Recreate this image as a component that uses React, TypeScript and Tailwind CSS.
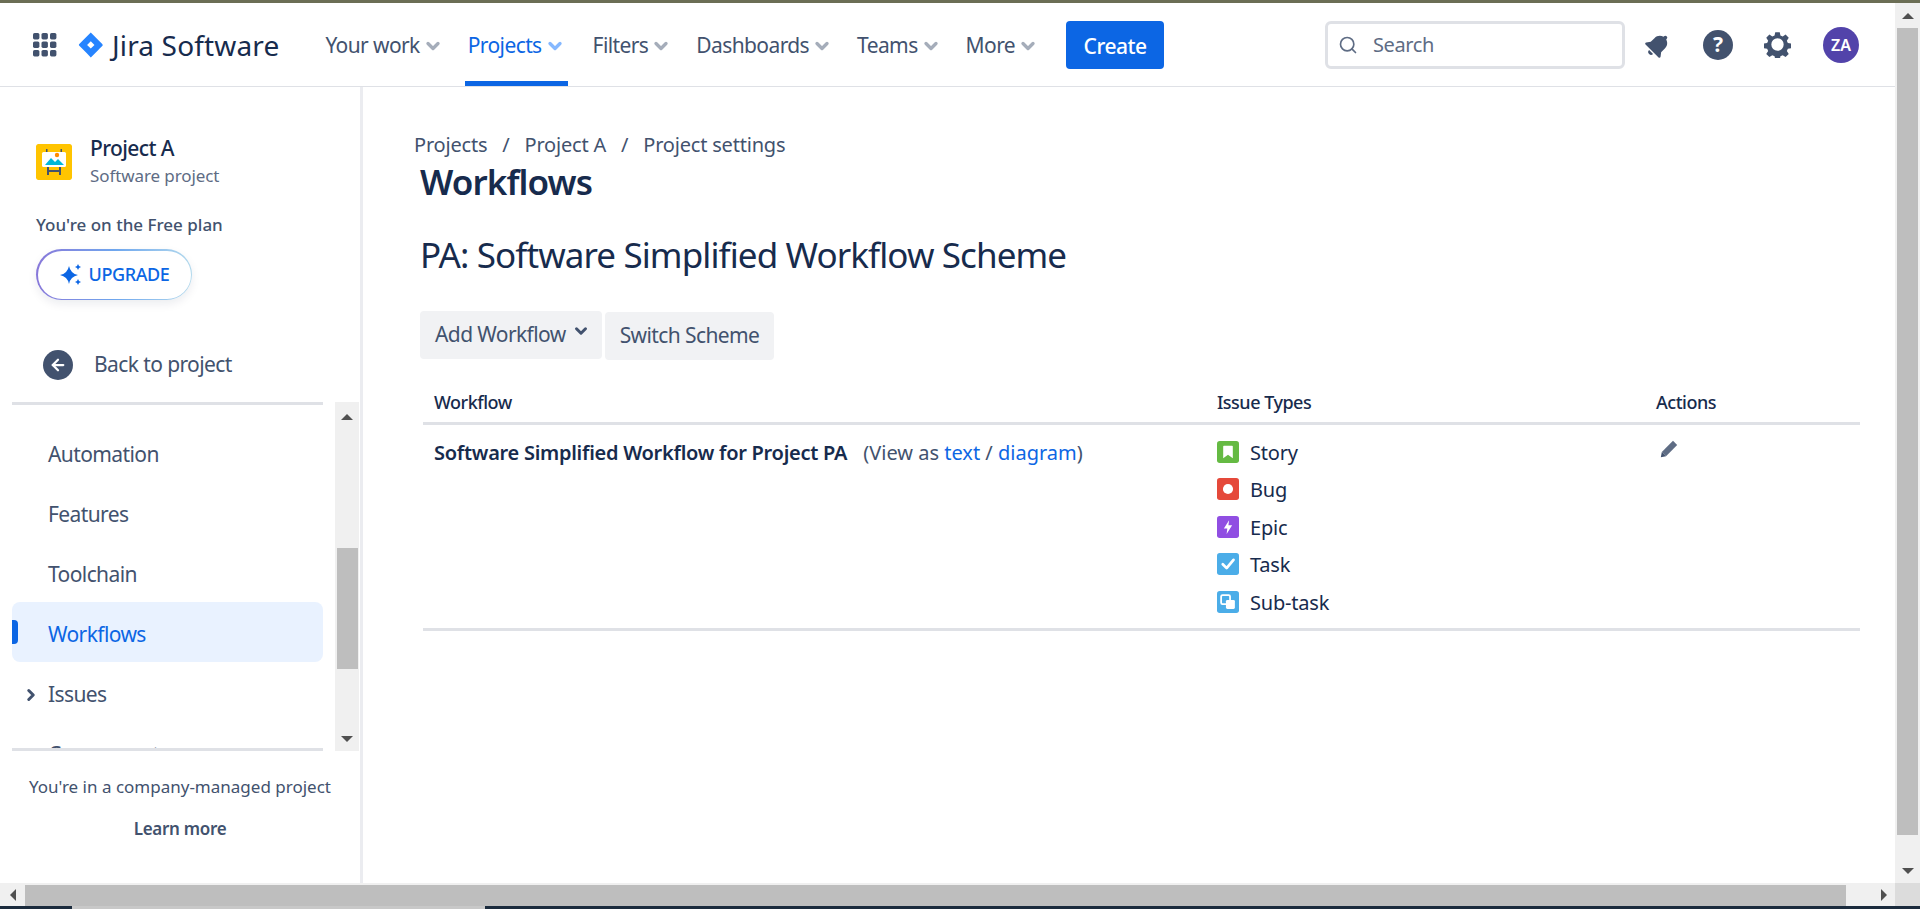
import { ChevronDown, ChevronRight, ArrowLeft, Search } from "lucide-react";

const font = "font-['Noto_Sans',sans-serif]";

function NavItem({ label, active }: { label: string; active?: boolean }) {
  return (
    <div
      className={`relative flex h-full items-center gap-[3px] px-[3px] pt-[3px] text-[21px] tracking-[-0.6px] ${
        active ? "mr-[3px] text-[#0c66e4]" : "text-[#42526e]"
      }`}
    >
      <span>{label}</span>
      <ChevronDown size={20} strokeWidth={4} className={active ? "text-[#85b8ff]" : "text-[#a5adba]"} />
      {active && <div className="absolute bottom-0 left-0 right-0 h-[5px] bg-[#0c66e4]" />}
    </div>
  );
}

function JiraMark() {
  return (
    <svg width="26" height="26" viewBox="0 0 24 24">
      <path
        fill="#2684ff"
        d="M22.6 11.3 12.7 1.4 11.8.5 4.4 7.9 1 11.3c-.3.3-.3.9 0 1.2l6.7 6.7 4.1 4.3 7.4-7.4.1-.1 3.3-3.3c.3-.3.3-.9 0-1.2zM11.8 15.3 8.4 11.9l3.4-3.4 3.4 3.4-3.4 3.4z"
      />
    </svg>
  );
}

function GridIcon() {
  const spots = [1, 9.5, 18];
  return (
    <svg width="24" height="24" viewBox="0 0 24 24" fill="#42526e">
      {spots.map((y) => spots.map((x) => <rect key={`${x}-${y}`} x={x - 1} y={y - 1} width="6.4" height="6.4" rx="1.6" />))}
    </svg>
  );
}

function TopBar() {
  return (
    <header className="flex h-[84px] shrink-0 items-center border-b border-[#dfe1e6] bg-white">
      <div className="ml-[33px]">
        <GridIcon />
      </div>
      <div className="ml-[21px]">
        <JiraMark />
      </div>
      <span className="ml-2 text-[28px] leading-none tracking-[0.15px] text-[#172b4d]">Jira Software</span>
      <nav className="ml-[43px] flex h-full items-center gap-[19px]">
        <NavItem label="Your work" />
        <NavItem label="Projects" active />
        <NavItem label="Filters" />
        <NavItem label="Dashboards" />
        <NavItem label="Teams" />
        <NavItem label="More" />
      </nav>
      <button className="ml-[25px] h-12 w-[98px] rounded-[4px] bg-[#0c66e4] pt-[4px] text-[21px] font-medium tracking-[-0.5px] text-white">
        Create
      </button>
      <div className="ml-auto flex h-12 w-[300px] items-center rounded-[6px] border-[3px] border-[#dfe1e6] pl-[10px]">
        <Search size={20} className="text-[#5e6c84]" />
        <span className="ml-[15px] text-[20px] tracking-[-0.4px] text-[#5e6c84]">Search</span>
      </div>
      <svg className="ml-[19px]" width="28" height="28" viewBox="0 0 24 24" fill="#42526e">
        <g transform="rotate(45 12 12)">
          <path d="M12 1.500a1.600 1.600 0 0 0-1.600 1.600v.6C7.400 4.500 5.700 7 5.700 10v4.500L3.300 17.600c-.5.7 0 1.600.8 1.600h15.800c.8 0 1.300-.9.800-1.600l-2.400-3.100V10c0-3-1.700-5.500-4.700-6.300v-.6A1.600 1.600 0 0 0 12 1.500z" />
          <path d="M9.600 20.400h4.800a2.400 2.400 0 0 1-4.800 0z" />
        </g>
      </svg>
      <div className="ml-[31px] flex h-[30px] w-[30px] items-center justify-center rounded-full bg-[#42526e] text-[21px] font-bold text-white">
        ?
      </div>
      <svg className="ml-[31px]" width="27" height="27" viewBox="0 0 24 24" fill="#42526e">
        <path
          fillRule="evenodd"
          d="M10 1h4l.6 3 2 .9 2.600-1.700 2.800 2.800-1.700 2.600.9 2 3 .6v4l-3 .6-.9 2 1.700 2.600-2.800 2.800-2.600-1.700-2 .9-.6 3h-4l-.6-3-2-.9-2.600 1.700-2.800-2.800 1.700-2.600-.9-2-3-.6v-4l3-.6.9-2L2 6l2.800-2.800 2.600 1.700 2-.9zM12 6.500a5.500 5.500 0 1 0 0 11 5.500 5.500 0 0 0 0-11z"
        />
      </svg>
      <div className="ml-[32px] mr-[36px] flex h-9 w-9 items-center justify-center rounded-full bg-[#5243aa] text-[16px] font-semibold text-white">
        ZA
      </div>
    </header>
  );
}

function ProjectIcon() {
  return (
    <svg width="36" height="36" viewBox="0 0 36 36" className="shrink-0 rounded-[2px]">
      <rect width="36" height="36" rx="2" fill="#ffc400" />
      <rect x="10" y="5" width="1.500" height="4" fill="#42526e" />
      <rect x="24.500" y="5" width="1.500" height="4" fill="#42526e" />
      <rect x="6" y="8" width="24" height="15" rx="1.500" fill="#ffffff" />
      <circle cx="21" cy="11" r="2.200" fill="#ff8b00" />
      <path d="M9 21 L15 14 L19 18 L22 15 L28 21 Z" fill="#00b8d9" />
      <rect x="11" y="23" width="2" height="8" fill="#42526e" />
      <rect x="23" y="23" width="2" height="8" fill="#42526e" />
      <rect x="11" y="26" width="14" height="2" fill="#42526e" />
    </svg>
  );
}

function SideItem({ label, active, caret }: { label: string; active?: boolean; caret?: boolean }) {
  return (
    <div
      className={`relative flex h-[60px] shrink-0 items-center rounded-lg pl-9 pt-[5px] text-[21px] tracking-[-0.6px] ${
        active ? "bg-[#e9f2ff] text-[#0c66e4]" : "text-[#42526e]"
      }`}
    >
      {active && <div className="absolute left-0 top-[18px] h-6 w-[6px] rounded-r-[4px] bg-[#0c66e4]" />}
      {caret && <ChevronRight size={18} strokeWidth={4} className="absolute left-[10px] text-[#42526e]" />}
      {label}
    </div>
  );
}

function ScrollTriangle({ dir }: { dir: "up" | "down" | "left" | "right" }) {
  const cls = {
    up: "border-x-[6px] border-b-[6px] border-x-transparent border-b-[#505050]",
    down: "border-x-[6px] border-t-[6px] border-x-transparent border-t-[#505050]",
    left: "border-y-[6px] border-r-[6px] border-y-transparent border-r-[#505050]",
    right: "border-y-[6px] border-l-[6px] border-y-transparent border-l-[#505050]",
  }[dir];
  return <div className={`h-0 w-0 ${cls}`} />;
}

function Sidebar() {
  return (
    <aside className="flex w-[363px] shrink-0 flex-col border-r-[3px] border-[#ebecf0] bg-white">
      <div className="flex h-[315px] shrink-0 flex-col pl-9 pt-[47px]">
        <div className="flex items-center gap-[18px]">
          <ProjectIcon />
          <div className="flex flex-col">
            <span className="text-[21px] font-medium leading-[28px] tracking-[-0.6px] text-[#172b4d]">Project A</span>
            <span className="text-[17px] leading-[28px] tracking-[-0.1px] text-[#5e6c84]">Software project</span>
          </div>
        </div>
        <div className="mt-[24px] text-[17px] font-medium leading-[22px] text-[#42526e]">You're on the Free plan</div>
        <div className="mt-[13px] h-[51px] w-[156px] rounded-full bg-gradient-to-r from-[#8777d9] via-[#6ea6ee] to-[#b3d9ec] p-[1.5px] shadow-[0_4px_10px_rgba(9,30,66,0.08)]">
          <div className="flex h-full w-full items-center justify-center gap-[6px] rounded-full bg-white">
            <svg width="24" height="24" viewBox="0 0 24 24" fill="#0c66e4">
              <path d="M10 3Q11.500 10.500 19 12 11.500 13.500 10 21 8.500 13.500 1 12 8.500 10.500 10 3z" />
              <path d="M19 1Q19.500 3.500 22 4 19.500 4.500 19 7 18.500 4.500 16 4 18.500 3.500 19 1z" />
              <path d="M19 16Q19.500 18.500 22 19 19.500 19.500 19 22 18.500 19.500 16 19 18.500 18.500 19 16z" />
            </svg>
            <span className="text-[18px] font-medium tracking-[-0.4px] text-[#0c66e4]">UPGRADE</span>
          </div>
        </div>
        <div className="ml-[7px] mt-[49px] flex items-center gap-[21px]">
          <div className="flex h-[30px] w-[30px] items-center justify-center rounded-full bg-[#42526e]">
            <ArrowLeft size={18} strokeWidth={3} className="text-white" />
          </div>
          <span className="text-[21px] tracking-[-0.6px] text-[#42526e]">Back to project</span>
        </div>
      </div>

      <div className="flex h-[349px] shrink-0">
        <div className="relative ml-3 flex h-full w-[311px] flex-col overflow-hidden border-t-[3px] border-[#dfe1e6] pt-[17px]">
          <SideItem label="Automation" />
          <SideItem label="Features" />
          <SideItem label="Toolchain" />
          <SideItem label="Workflows" active />
          <SideItem label="Issues" caret />
          <SideItem label="Components" />
          <div className="absolute bottom-0 left-0 right-0 h-[3px] bg-[#dfe1e6]" />
        </div>
        <div className="ml-3 flex h-full w-[24px] flex-col bg-[#f0f0f0]">
          <div className="flex h-[25px] items-center justify-center pt-1">
            <ScrollTriangle dir="up" />
          </div>
          <div className="mt-[121px] ml-[2px] h-[121px] w-[21px] bg-[#bebebe]" />
          <div className="mt-auto flex h-[25px] items-center justify-center">
            <ScrollTriangle dir="down" />
          </div>
        </div>
      </div>

      <div className="flex flex-1 flex-col items-center pt-[24px] text-center">
        <span className="text-[17px] leading-[24px] text-[#42526e]">You're in a company-managed project</span>
        <span className="mt-[18px] text-[17px] font-semibold leading-[24px] tracking-[-0.3px] text-[#42526e]">Learn more</span>
      </div>
    </aside>
  );
}

function IssueIcon({ type }: { type: "story" | "bug" | "epic" | "task" | "subtask" }) {
  const bg = { story: "#65ba43", bug: "#e5493a", epic: "#904ee2", task: "#4bade8", subtask: "#4bade8" }[type];
  return (
    <svg width="22" height="22" viewBox="0 0 16 16" className="shrink-0">
      <rect width="16" height="16" rx="2" fill={bg} />
      {type === "story" && <path d="M5 3.500h6a.5.5 0 0 1 .5.5v8.500L8 10l-3.500 2.500V4a.5.5 0 0 1 .5-.5z" fill="#fff" />}
      {type === "bug" && <circle cx="8" cy="8" r="3.700" fill="#fff" />}
      {type === "epic" && <path d="M8.800 3 5 9h2.500L7 13l4-6.200H8.300z" fill="#fff" />}
      {type === "task" && <path d="M4.200 8.200 7 11l5-6" fill="none" stroke="#fff" strokeWidth="2" strokeLinecap="round" strokeLinejoin="round" />}
      {type === "subtask" && (
        <>
          <rect x="3" y="3" width="6.500" height="6.500" rx="1" fill="none" stroke="#fff" strokeWidth="1.300" />
          <rect x="6.500" y="6.500" width="6.500" height="6.500" rx="1" fill="#fff" />
        </>
      )}
    </svg>
  );
}

const issueTypes = [
  { type: "story", label: "Story" },
  { type: "bug", label: "Bug" },
  { type: "epic", label: "Epic" },
  { type: "task", label: "Task" },
  { type: "subtask", label: "Sub-task" },
] as const;

function MainContent() {
  return (
    <main className="flex-1 bg-white pl-[51px] pr-[35px] pt-[44px]">
      <div className="flex h-[27px] items-center text-[20px] tracking-[-0.2px] text-[#42526e]">
        <span>Projects</span>
        <span className="mx-[15px]">/</span>
        <span>Project A</span>
        <span className="mx-[15px]">/</span>
        <span>Project settings</span>
      </div>
      <div className="pl-[6px]">
        <h1 className="mt-[2px] text-[35px] font-semibold leading-[44px] tracking-[-0.9px] text-[#172b4d]">Workflows</h1>
        <h2 className="mt-[25px] text-[35px] leading-[52px] tracking-[-0.9px] text-[#172b4d]">
          PA: Software Simplified Workflow Scheme
        </h2>
        <div className="mt-[30px] flex items-start gap-[3px]">
          <button className="flex h-12 w-[182px] items-center gap-[6px] rounded-[4px] bg-[#f1f2f4] pl-[15px] text-[21px] tracking-[-0.6px] text-[#42526e]">
            Add Workflow
            <ChevronDown size={18} strokeWidth={4} className="-translate-y-1 text-[#42526e]" />
          </button>
          <button className="mt-[1px] h-12 w-[169px] rounded-[4px] bg-[#f1f2f4] text-[21px] tracking-[-0.6px] text-[#42526e]">
            Switch Scheme
          </button>
        </div>
        <table className="ml-[3px] mt-[23px] w-[1437px] table-fixed border-b-[3px] border-[#dfe1e6] text-left text-[#172b4d]">
          <thead>
            <tr className="border-b-[3px] border-[#dfe1e6] text-[18px] tracking-[-0.5px]">
              <th className="h-10 w-[794px] pl-[11px] font-medium">Workflow</th>
              <th className="w-[439px] font-medium">Issue Types</th>
              <th className="font-medium">Actions</th>
            </tr>
          </thead>
          <tbody>
            <tr className="align-top">
              <td className="pl-[11px] pt-[14px] text-[20px] leading-[28px]">
                <span className="font-semibold tracking-[-0.27px]">Software Simplified Workflow for Project PA</span>
                <span className="ml-4 text-[#42526e]">
                  (View as <span className="text-[#0c66e4]">text</span> / <span className="text-[#0c66e4]">diagram</span>)
                </span>
              </td>
              <td className="pb-[15px] pt-[16px]">
                <div className="flex flex-col gap-[15.500px]">
                  {issueTypes.map((item) => (
                    <div key={item.type} className="flex h-[22px] items-center gap-[11px] text-[20px] tracking-[-0.2px]">
                      <IssueIcon type={item.type} />
                      <span className="pt-[2px]">{item.label}</span>
                    </div>
                  ))}
                </div>
              </td>
              <td className="pl-[4px] pt-[15px]">
                <svg width="18" height="18" viewBox="0 0 18 18">
                  <path d="M13 .800 17.200 5 6 16.200 1.800 12z" fill="#5e6c84" />
                  <path d="M1.800 12 6 16.200 .800 17.200z" fill="#42526e" />
                </svg>
              </td>
            </tr>
          </tbody>
        </table>
      </div>
    </main>
  );
}

export default function App() {
  return (
    <div className={`flex h-[909px] w-[1920px] flex-col overflow-hidden bg-white ${font}`}>
      <div className="h-[3px] shrink-0 bg-[#6b6e55]" />
      <div className="flex min-h-0 flex-1">
        <div className="flex min-w-0 flex-1 flex-col">
          <TopBar />
          <div className="flex min-h-0 flex-1">
            <Sidebar />
            <MainContent />
          </div>
        </div>
        <div className="flex w-[25px] shrink-0 flex-col bg-[#f0f0f0]">
          <div className="flex h-[25px] items-center justify-center">
            <ScrollTriangle dir="up" />
          </div>
          <div className="ml-[2px] h-[807px] w-[21px] bg-[#bebebe]" />
          <div className="mt-auto flex h-[25px] items-center justify-center">
            <ScrollTriangle dir="down" />
          </div>
        </div>
      </div>
      <div className="flex h-[23px] shrink-0 items-center bg-[#f0f0f0]">
        <div className="flex w-[25px] justify-center">
          <ScrollTriangle dir="left" />
        </div>
        <div className="h-[21px] w-[1821px] self-end bg-[#bebebe]" />
        <div className="flex w-[49px] justify-end pr-[8px]">
          <ScrollTriangle dir="right" />
        </div>
        <div className="h-full w-[25px] bg-[#dcdcdc]" />
      </div>
      <div className="flex h-[3px] shrink-0 bg-[#1b2b3d]">
        <div className="ml-[72px] h-full w-[413px] bg-[#c8c8c8]" />
      </div>
    </div>
  );
}
